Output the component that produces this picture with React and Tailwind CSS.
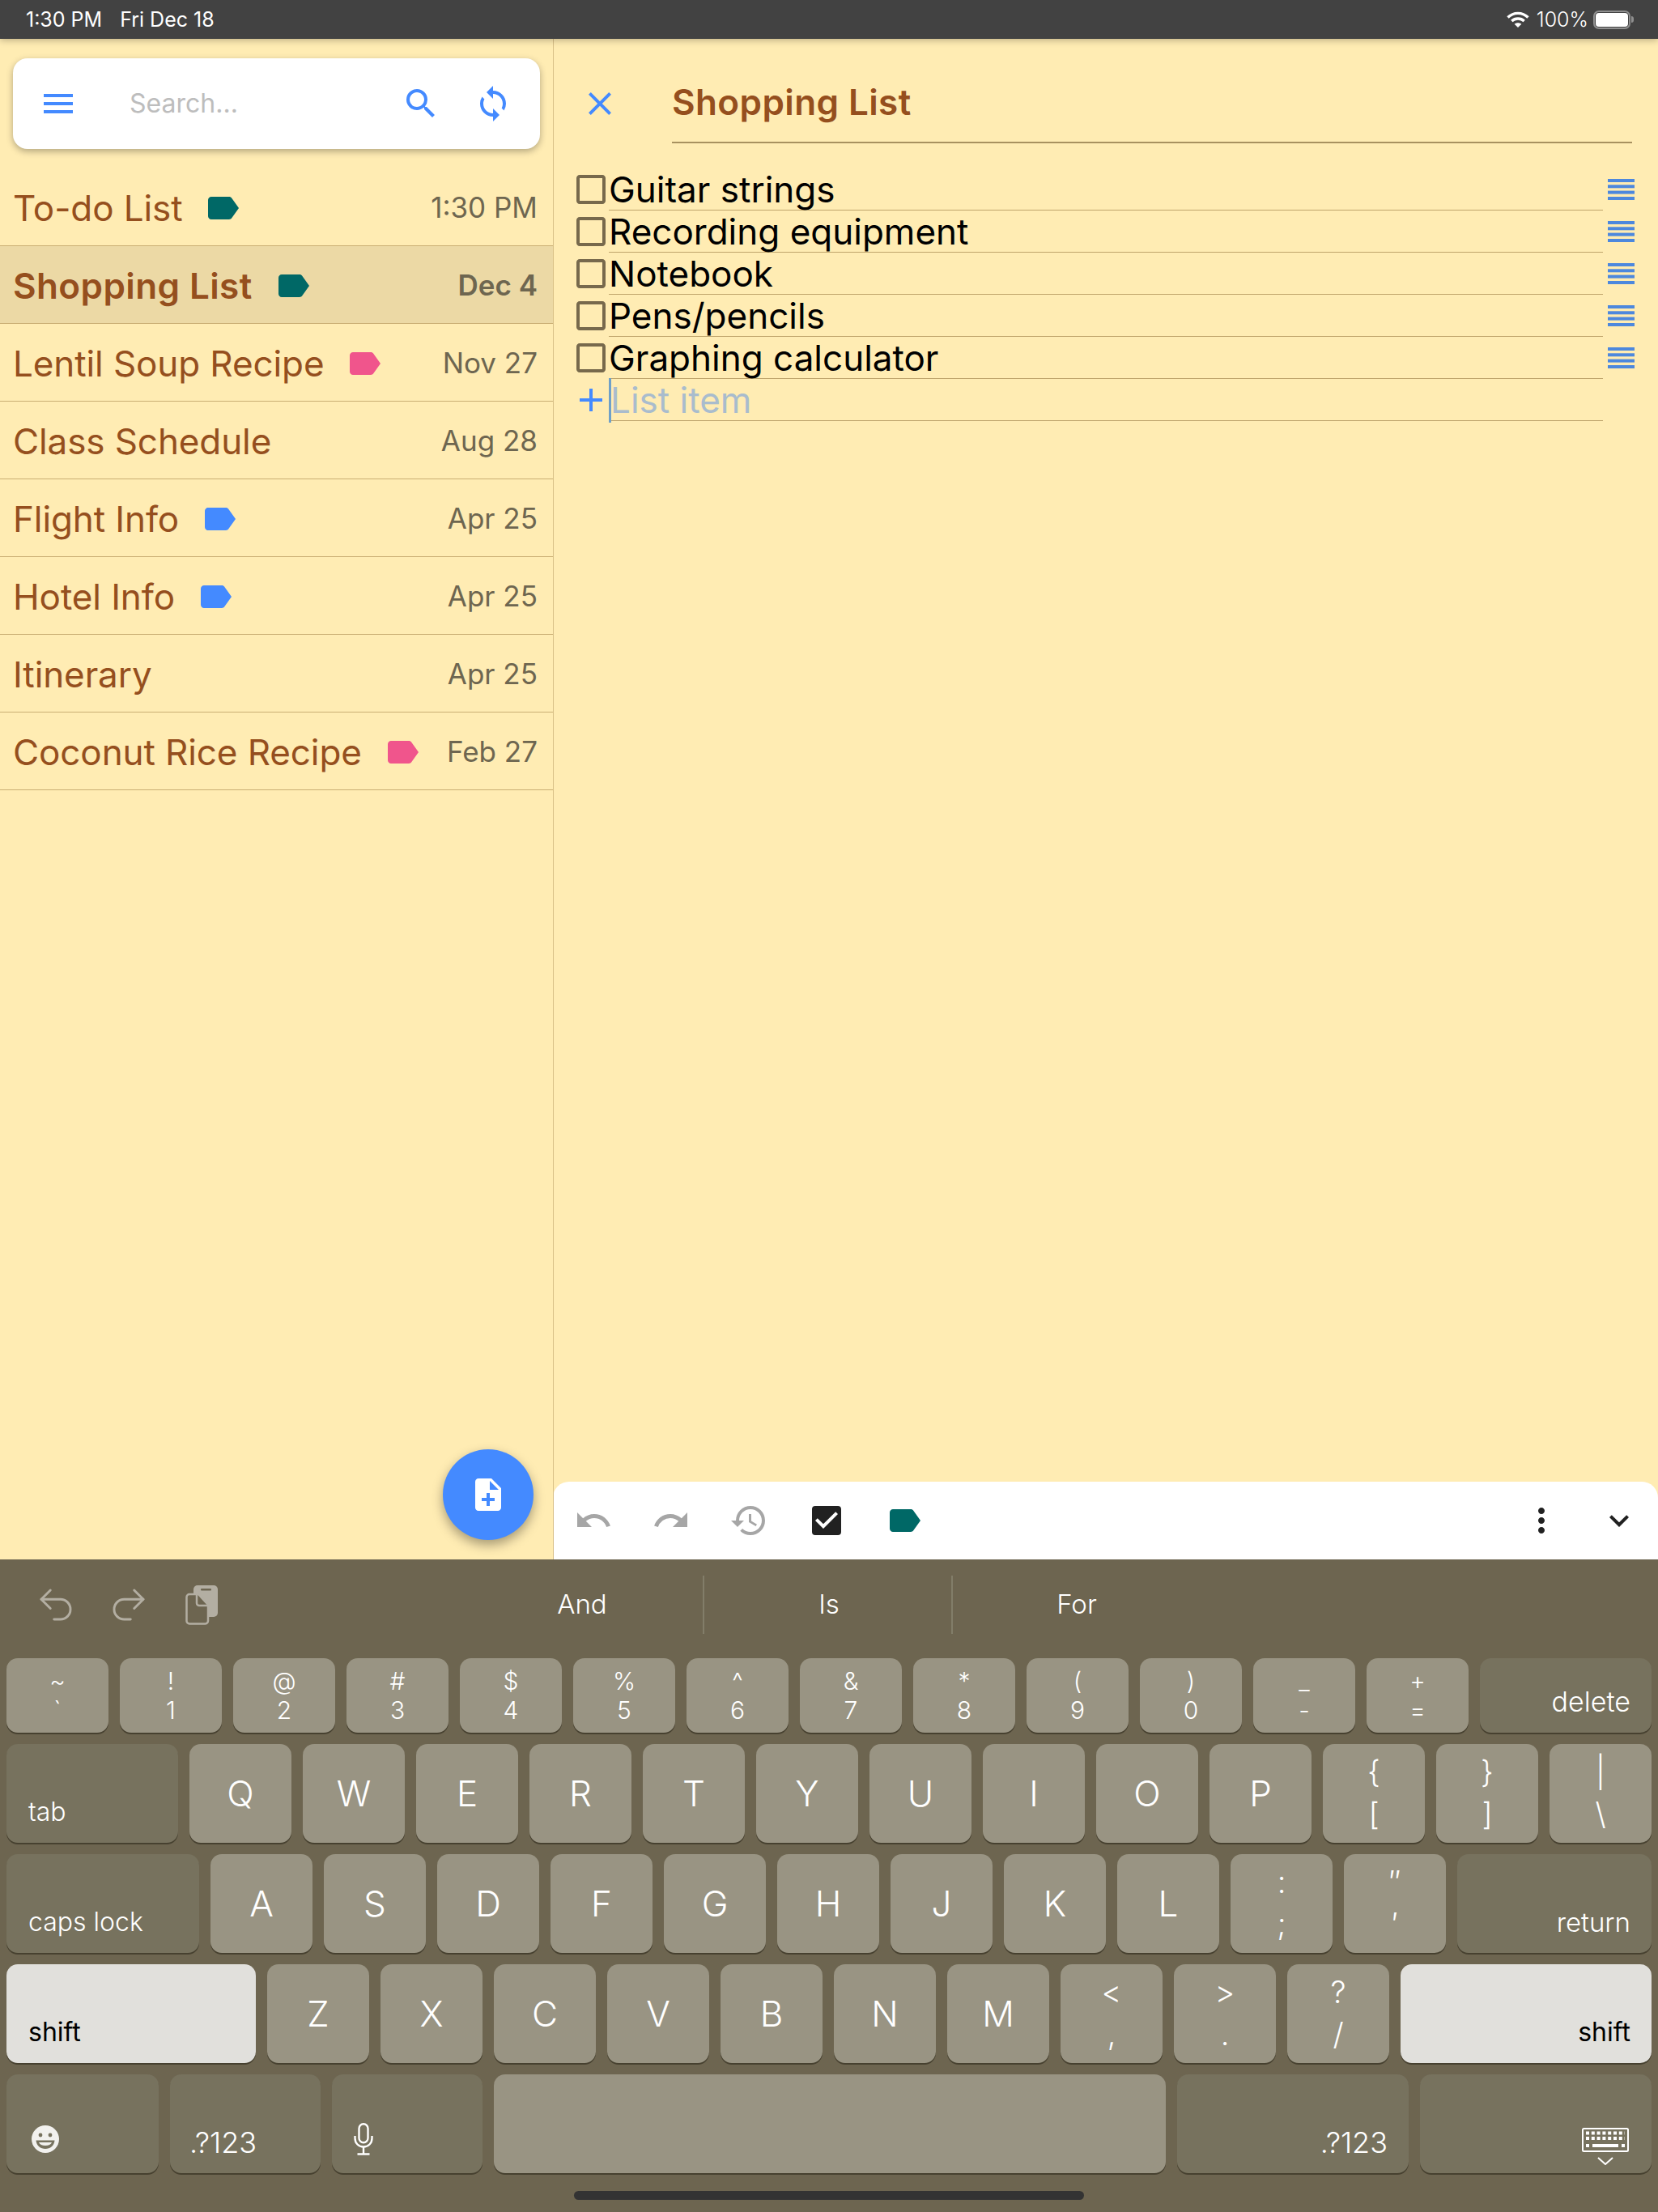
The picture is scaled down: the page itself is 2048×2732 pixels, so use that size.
import React from "react";
import {
  MdMenu,
  MdSearch,
  MdSync,
  MdClose,
  MdNoteAdd,
  MdUndo,
  MdRedo,
  MdHistory,
  MdCheckBox,
  MdCheckBoxOutlineBlank,
  MdLabel,
  MdMoreVert,
  MdExpandMore,
  MdAdd,
} from "react-icons/md";
import { Undo2, Redo2 } from "lucide-react";

const notes = [
  { title: "To-do List", date: "1:30 PM", tag: "text-[#006866]" },
  { title: "Shopping List", date: "Dec 4", tag: "text-[#006866]", active: true },
  { title: "Lentil Soup Recipe", date: "Nov 27", tag: "text-[#f0558c]" },
  { title: "Class Schedule", date: "Aug 28" },
  { title: "Flight Info", date: "Apr 25", tag: "text-[#448aff]" },
  { title: "Hotel Info", date: "Apr 25", tag: "text-[#448aff]" },
  { title: "Itinerary", date: "Apr 25" },
  { title: "Coconut Rice Recipe", date: "Feb 27", tag: "text-[#f0558c]" },
];

const items = ["Guitar strings", "Recording equipment", "Notebook", "Pens/pencils", "Graphing calculator"];

const numberRow = [
  ["~", "`"],
  ["!", "1"],
  ["@", "2"],
  ["#", "3"],
  ["$", "4"],
  ["%", "5"],
  ["^", "6"],
  ["&", "7"],
  ["*", "8"],
  ["(", "9"],
  [")", "0"],
  ["_", "-"],
  ["+", "="],
];

const StatusBar = () => (
  <div className="h-[48px] shrink-0 bg-[#424242] flex items-center pl-[32px] pr-[30px] text-white text-[25px] leading-none relative z-10 shadow-[0_2px_8px_rgba(0,0,0,0.25)]">
    <span>1:30 PM</span>
    <span className="ml-[22px]">Fri Dec 18</span>
    <div className="ml-auto flex items-center">
      <svg width="28" height="20" viewBox="0 0 28 20" fill="none" stroke="white" strokeWidth="3.4">
        <path d="M1.5 7.5C8.5 .6 19.5 .6 26.500 7.500" />
        <path d="M6.300 12C10.500 8 17.500 8 21.700 12" />
        <path d="M14 20l-4.300-4.300c2.300-2 6.300-2 8.600 0z" fill="white" stroke="none" />
      </svg>
      <span className="ml-[9px] font-light">100%</span>
      <div className="ml-[6px] w-[46px] h-[23px] rounded-[7px] border-2 border-[#8f8f8f] p-[1px]">
        <div className="w-full h-full bg-white rounded-[4px]" />
      </div>
      <div className="ml-[1px] w-[3px] h-[8px] rounded-r-[3px] bg-[#8f8f8f]" />
    </div>
  </div>
);

const NoteRow = ({ note }) => (
  <div
    className={`h-[96px] pl-[16px] pr-[19px] pt-[2px] flex items-center border-b border-[#c9ae74] ${
      note.active ? "bg-[#ecd9a5] font-semibold" : ""
    }`}
  >
    <span className={`text-[44px] leading-none text-[#954f1e] ${note.active ? "tracking-[0.4px]" : "tracking-[-0.1px]"}`}>
      {note.title}
    </span>
    {note.tag && <MdLabel size={48} className={`ml-[26px] ${note.tag}`} />}
    <span className="ml-auto text-[35px] leading-none text-[#6e6650]">{note.date}</span>
  </div>
);

const Sidebar = () => (
  <div className="w-[684px] shrink-0 relative border-r border-[#d9c088]">
    <div className="ml-[16px] mt-[24px] mb-[24px] w-[651px] h-[112px] bg-white rounded-[18px] shadow-[0_3px_8px_rgba(0,0,0,0.3)] flex items-center pl-[32px] pr-[34px] text-[#448aff]">
      <MdMenu size={48} />
      <span className="ml-[64px] text-[32px] text-[#bdbdbd] flex-1">Search...</span>
      <MdSearch size={48} />
      <MdSync size={48} className="ml-[41px]" />
    </div>
    {notes.map((note) => (
      <NoteRow key={note.title} note={note} />
    ))}
    <div className="absolute left-[547px] top-[1742px] w-[112px] h-[112px] rounded-full bg-[#448aff] flex items-center justify-center text-white shadow-[0_6px_14px_rgba(0,0,0,0.35)]">
      <MdNoteAdd size={48} />
    </div>
  </div>
);

const ItemRow = ({ text }) => (
  <div className="h-[52px] flex items-start">
    <MdCheckBoxOutlineBlank size={48} className="shrink-0 mt-[2px] text-[#77694c] -mr-[2px]" />
    <div className="flex-1 h-full border-b border-[#bfa46c] text-[44px] leading-[52px] text-black">{text}</div>
    <svg width="33" height="26" viewBox="0 0 33 26" className="ml-[6px] mt-[13px]" fill="#4d88dd">
      <rect y="0" width="33" height="4" />
      <rect y="7.300" width="33" height="4" />
      <rect y="14.600" width="33" height="4" />
      <rect y="22" width="33" height="4" />
    </svg>
  </div>
);

const Editor = () => (
  <div className="flex-1 flex flex-col">
    <div className="flex items-start">
      <MdClose size={48} className="ml-[33px] mt-[56px] text-[#448aff] shrink-0" />
      <div className="ml-[65px] mr-[32px] mt-[32px] flex-1 h-[97px] border-b-2 border-[#a8915f] flex items-center text-[44px] font-semibold tracking-[0.4px] text-[#954f1e] pb-[4px]">
        Shopping List
      </div>
    </div>
    <div className="mt-[31px] ml-[22px] mr-[29px]">
      {items.map((text) => (
        <ItemRow key={text} text={text} />
      ))}
      <div className="h-[52px] flex items-center mr-[39px]">
        <MdAdd size={48} className="shrink-0 text-[#448aff] -mr-[2px]" />
        <div className="flex-1 h-full border-b border-[#bfa46c] text-[44px] leading-[52px] text-[#a9bccd] flex">
          <div className="w-[3px] h-[55px] bg-[#6fa0c8] -mt-[1px]" />
          <span className="-ml-[1px]">List item</span>
        </div>
      </div>
    </div>
    <div className="mt-auto -ml-[1px] h-[96px] bg-white rounded-t-[20px] flex items-center pl-[26px] pr-[24px] gap-[48px]">
      <MdUndo size={48} className="text-[#a6a6a6]" />
      <MdRedo size={48} className="text-[#a6a6a6]" />
      <MdHistory size={48} className="text-[#a6a6a6]" />
      <MdCheckBox size={48} className="text-[#212121]" />
      <MdLabel size={48} className="text-[#006866]" />
      <MdMoreVert size={48} className="text-[#212121] ml-auto" />
      <MdExpandMore size={48} className="text-[#212121]" />
    </div>
  </div>
);

const ClipboardIcon = () => (
  <svg width="40" height="49" viewBox="0 0 40 49" className="ml-[43px]">
    <rect x="10" y="0" width="30" height="39" rx="5" fill="#b3aea2" />
    <rect x="19" y="4" width="13" height="2.500" rx="1" fill="#6d6550" />
    <path d="M5 11h11l12 13v20a3.500 3.500 0 0 1-3.500 3.500H5A3.500 3.500 0 0 1 1.500 44V14.500A3.500 3.500 0 0 1 5 11z" fill="#6d6550" stroke="#b3aea2" strokeWidth="2.500" />
    <path d="M14 11v11a3 3 0 0 0 3 3h11" fill="none" stroke="#b3aea2" strokeWidth="2.500" />
  </svg>
);

const SuggestionBar = () => (
  <div className="h-[122px] pb-[10px] flex items-center text-white">
    <div className="w-[564px] flex items-center shrink-0 text-[#b3aea2]">
      <Undo2 size={54} strokeWidth={1.3} className="ml-[42px]" />
      <Redo2 size={54} strokeWidth={1.3} className="ml-[36px]" />
      <ClipboardIcon />
    </div>
    <div className="w-[306px] h-[72px] pl-[6px] flex items-center justify-center border-r-2 border-[#827d69] text-[33px] font-light">And</div>
    <div className="w-[307px] h-[72px] pl-[3px] flex items-center justify-center border-r-2 border-[#827d69] text-[33px] font-light">Is</div>
    <div className="w-[306px] h-[72px] flex items-center justify-center text-[33px] font-light">For</div>
  </div>
);

// plain letter key
const Key = ({ label }) => (
  <div className="w-[126px] h-[122px] rounded-[14px] bg-[#999483] shadow-[0_2px_0_#474130] flex items-center justify-center text-white text-[44px] font-light">
    {label}
  </div>
);

// two symbols, one above the other
const PairKey = ({ top, bottom, small }) => (
  <div
    className={`w-[126px] rounded-[14px] bg-[#999483] shadow-[0_2px_0_#474130] flex flex-col items-center justify-center text-white font-light ${
      small ? "h-[92px] text-[30px] leading-[36px]" : "h-[122px] text-[38px] leading-[52px] pb-[2px]"
    }`}
  >
    <span>{top}</span>
    <span>{bottom}</span>
  </div>
);

// modifier key with the label in a lower corner
const ModKey = ({ width, height, light, right, size = "text-[32px]", pad = "pl-[27px]", children }) => (
  <div
    className={`${width} ${height} ${size} rounded-[14px] shadow-[0_2px_0_#474130] flex items-end pb-[19px] leading-[38px] font-light ${
      light ? "bg-[#e1e0dc] text-black font-normal" : "bg-[#77725e] text-white"
    } ${right ? "justify-end pr-[26px]" : pad}`}
  >
    {children}
  </div>
);

const Emoji = () => (
  <svg width="34" height="34" viewBox="0 0 34 34" className="ml-[4px] mb-[6px]">
    <circle cx="17" cy="17" r="17" fill="#f2f1ee" />
    <circle cx="11" cy="12" r="2.400" fill="#77725e" />
    <circle cx="23" cy="12" r="2.400" fill="#77725e" />
    <path d="M5.500 18.500h23c-.5 6.500-5.500 10.500-11.500 10.500S6 25 5.500 18.500z" fill="#77725e" />
    <path d="M9 21h16c-1 2.500-4 4-8 4s-7-1.500-8-4z" fill="#f2f1ee" />
  </svg>
);

const Mic = () => (
  <svg width="24" height="40" viewBox="0 0 24 40" fill="none" stroke="white" strokeWidth="2.400" className="mb-[3px]">
    <rect x="6.500" y="1.200" width="11" height="23" rx="5.500" />
    <path d="M1.500 16v3c0 6 4.500 10.500 10.500 10.500S22.500 25 22.500 19v-3" />
    <path d="M12 29.500V38M4.500 38.500h15" />
  </svg>
);

const KeyboardHide = () => (
  <svg width="58" height="46" viewBox="0 0 58 46" fill="none">
    <rect x="1" y="1" width="56" height="28" rx="1.500" stroke="white" strokeWidth="2" />
    <path d="M5 6.500h48M5 13h48" stroke="white" strokeWidth="4" strokeDasharray="4 2.800" />
    <path d="M5 22h4M13 22h32M49 22h4" stroke="white" strokeWidth="4" />
    <path d="M20 37l9 8 9-8" stroke="white" strokeWidth="2" />
  </svg>
);

const Keyboard = () => (
  <div className="h-[806px] bg-[#6d6550] shrink-0">
    <SuggestionBar />
    <div className="px-[8px] flex flex-col gap-[14px]">
      <div className="flex gap-[14px]">
        {numberRow.map(([top, bottom]) => (
          <PairKey key={top} top={top} bottom={bottom} small />
        ))}
        <ModKey width="w-[212px]" height="h-[92px]" size="text-[34px]" right>delete</ModKey>
      </div>
      <div className="flex gap-[14px]">
        <ModKey width="w-[212px]" height="h-[122px]">tab</ModKey>
        {"QWERTYUIOP".split("").map((k) => (
          <Key key={k} label={k} />
        ))}
        <PairKey top="{" bottom="[" />
        <PairKey top="}" bottom="]" />
        <PairKey top="|" bottom="\" />
      </div>
      <div className="flex gap-[14px]">
        <ModKey width="w-[238px]" height="h-[122px]">caps lock</ModKey>
        {"ASDFGHJKL".split("").map((k) => (
          <Key key={k} label={k} />
        ))}
        <PairKey top=":" bottom=";" />
        <PairKey top="″" bottom="′" />
        <ModKey width="w-[240px]" height="h-[122px]" size="text-[33px]" right>return</ModKey>
      </div>
      <div className="flex gap-[14px]">
        <ModKey width="w-[308px]" height="h-[122px]" light>shift</ModKey>
        {"ZXCVBNM".split("").map((k) => (
          <Key key={k} label={k} />
        ))}
        <PairKey top="<" bottom="," />
        <PairKey top=">" bottom="." />
        <PairKey top="?" bottom="/" />
        <ModKey width="w-[310px]" height="h-[122px]" light right>shift</ModKey>
      </div>
      <div className="flex gap-[14px]">
        <ModKey width="w-[188px]" height="h-[122px]"><Emoji /></ModKey>
        <ModKey width="w-[186px]" height="h-[122px]" size="text-[36px]" pad="pl-[24px]">.?123</ModKey>
        <ModKey width="w-[186px]" height="h-[122px]"><Mic /></ModKey>
        <div className="w-[830px] h-[122px] rounded-[14px] bg-[#999483] shadow-[0_2px_0_#474130]" />
        <ModKey width="w-[286px]" height="h-[122px]" size="text-[36px]" right>.?123</ModKey>
        <div className="w-[286px] h-[122px] rounded-[14px] bg-[#77725e] shadow-[0_2px_0_#474130] flex items-end justify-end pr-[28px] pb-[10px]">
          <KeyboardHide />
        </div>
      </div>
    </div>
    <div className="mt-[22px] ml-[709px] w-[630px] h-[11px] rounded-full bg-[#333333]" />
  </div>
);

const App = () => (
  <div className="w-[2048px] h-[2732px] overflow-hidden flex flex-col bg-[#ffecb3] font-[Inter,sans-serif]">
    <StatusBar />
    <div className="flex-1 flex min-h-0">
      <Sidebar />
      <Editor />
    </div>
    <Keyboard />
  </div>
);

export default App;
